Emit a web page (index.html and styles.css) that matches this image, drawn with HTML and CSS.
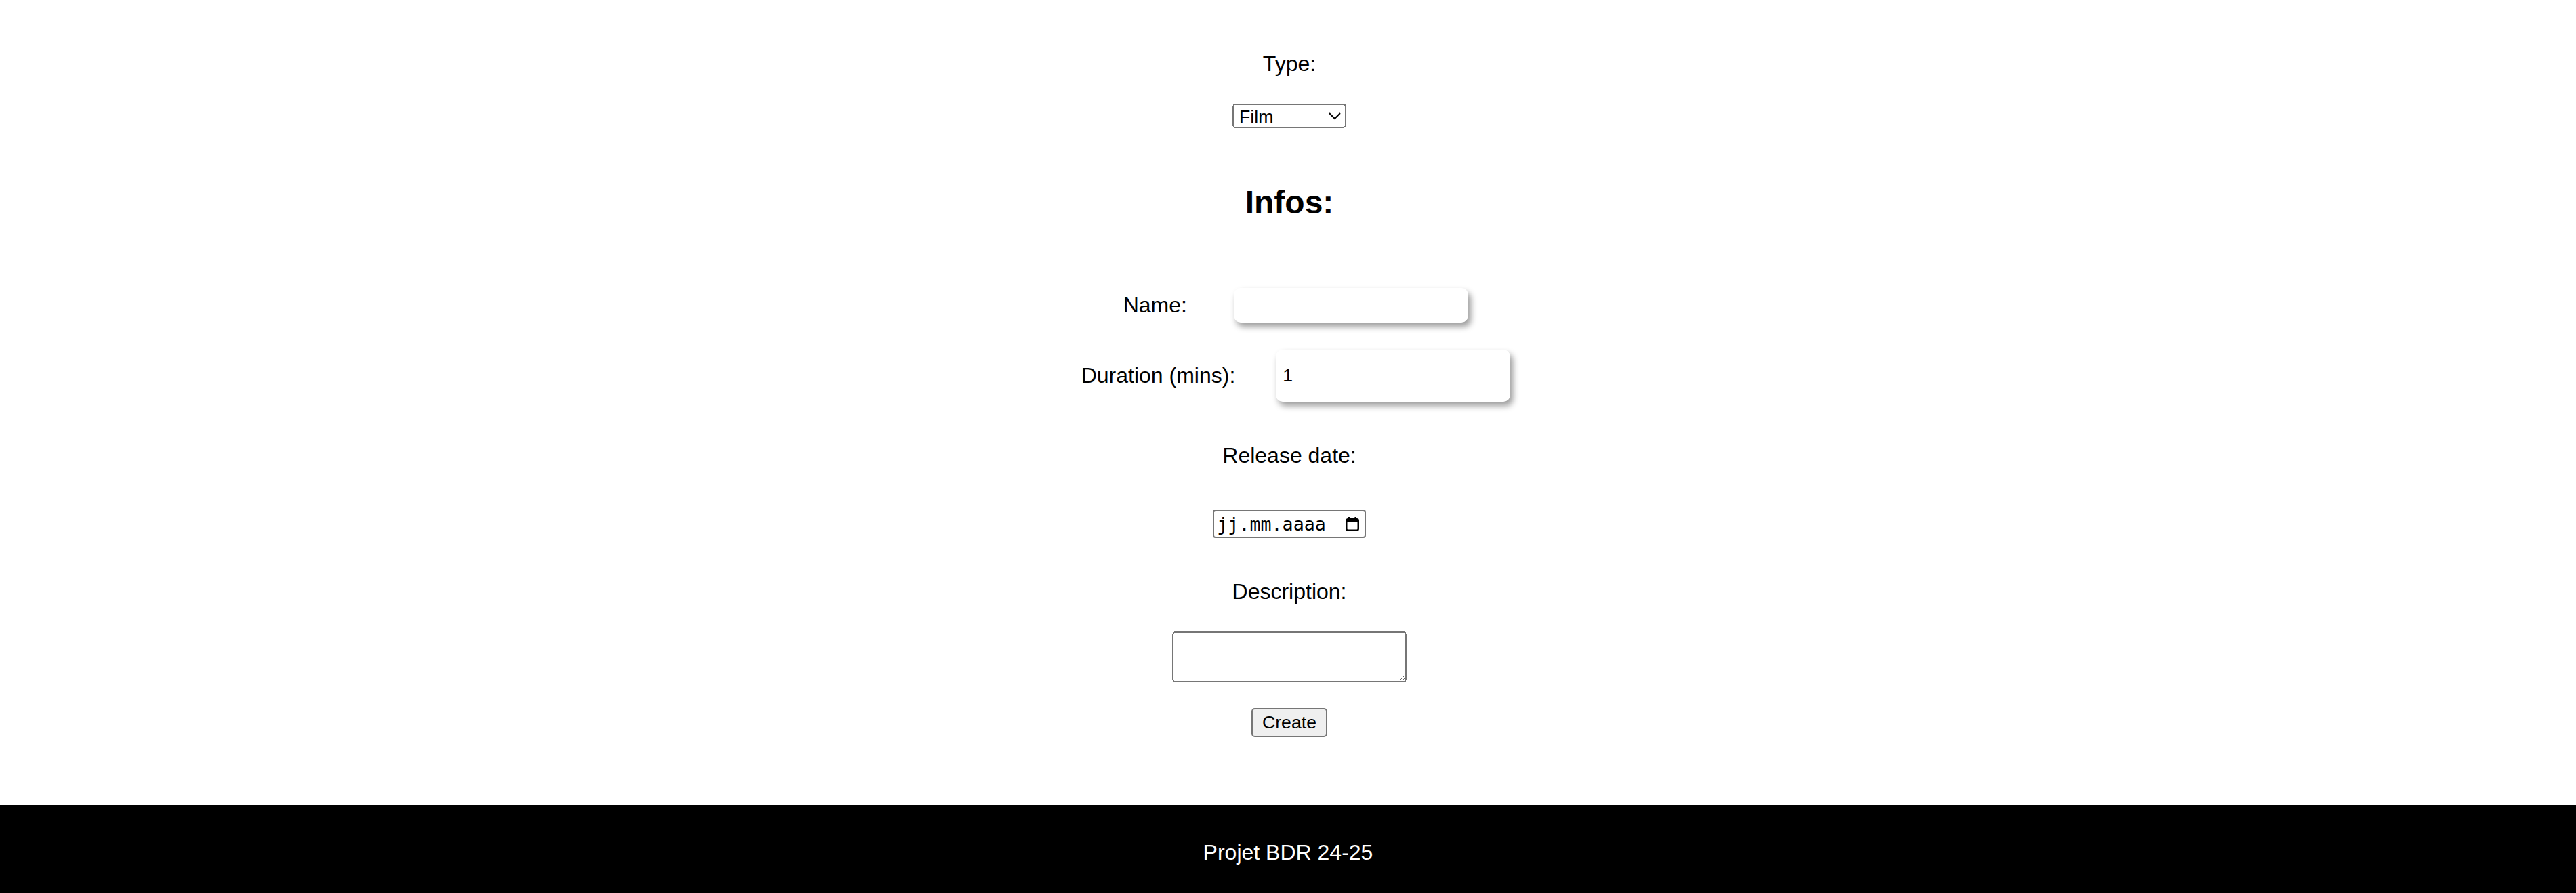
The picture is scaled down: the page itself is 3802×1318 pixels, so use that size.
FILE: index.html
```html
<!DOCTYPE html>
<html lang="fr">
<head>
<meta charset="utf-8">
<title>Create</title>
<link rel="stylesheet" href="styles.css">
</head>
<body>
<main class="page">
  <form class="form">
    <label class="label" for="type">Type:</label>
    <select id="type" class="select">
      <option>Film</option>
      <option>Série</option>
    </select>
    <h2 class="heading">Infos:</h2>
    <div class="row row--name">
      <label class="row-label row-label--name" for="name">Name:</label>
      <input id="name" class="field field--name" type="text">
    </div>
    <div class="row row--duration">
      <label class="row-label" for="duration">Duration (mins):</label>
      <input id="duration" class="field field--duration" type="number" value="1" min="1">
    </div>
    <label class="label label--date" for="release">Release date:</label>
    <div class="date-field">
      <input id="release" class="date-input" type="text" placeholder="jj.mm.aaaa">
      <svg class="date-icon" viewBox="0 0 20 21" aria-hidden="true">
        <rect x="1.25" y="3.25" width="17.5" height="16.5" rx="2.2" fill="none" stroke="#000" stroke-width="2.5"/>
        <rect x="1" y="3" width="18" height="5" fill="#000"/>
        <rect x="4" y="0" width="2.6" height="4" fill="#000"/>
        <rect x="13.4" y="0" width="2.6" height="4" fill="#000"/>
      </svg>
    </div>
    <label class="label label--desc" for="desc">Description:</label>
    <textarea id="desc" class="textarea"></textarea>
    <button class="button" type="submit">Create</button>
  </form>
</main>
<footer class="footer">
  <p class="footer-text">Projet BDR 24-25</p>
</footer>
</body>
</html>
```

FILE: styles.css
```css
html {
  zoom: 2;
}

body {
  margin: 0;
  font-family: "Liberation Sans", Arial, sans-serif;
  font-size: 16px;
  color: #000;
  background: #fff;
}

.page {
  padding: 38px 0 0 2px;
}

.form {
  display: flex;
  flex-direction: column;
  align-items: center;
  margin: 0;
}

.label {
  display: block;
  line-height: normal;
}

.select {
  margin: 20px 0 0;
  width: 84px;
  height: 18px;
  font: 13.333px "Liberation Sans", Arial, sans-serif;
  color: #000;
}

.heading {
  margin: 41px 0 0;
  font-size: 24px;
  font-weight: bold;
  line-height: normal;
}

.row {
  display: flex;
  align-items: center;
  gap: 30px;
  padding-left: 9.5px;
}

.row--name {
  margin-top: 49.6px;
}

.row--duration {
  margin-top: 20px;
}

.row-label {
  line-height: normal;
}

.row-label--name {
  margin-right: 4.7px;
}

.field {
  width: 173px;
  margin: 0;
  padding: 0 5px;
  box-sizing: border-box;
  border: none;
  border-radius: 5px;
  background: #fff;
  color: #000;
  font: 13.333px "Liberation Sans", Arial, sans-serif;
  box-shadow: 2px 3px 5px rgba(0, 0, 0, 0.4);
}

.field--name {
  height: 25.5px;
}

.field--duration {
  height: 38.5px;
  appearance: textfield;
}

.field--duration::-webkit-inner-spin-button,
.field--duration::-webkit-outer-spin-button {
  -webkit-appearance: none;
  margin: 0;
}

.label--date {
  margin-top: 30.5px;
}

.date-field {
  margin-top: 30.6px;
  width: 112.7px;
  height: 21px;
  box-sizing: border-box;
  border: 1px solid #767676;
  border-radius: 2px;
  display: flex;
  align-items: center;
  padding: 0 4px 0 2px;
  background: #fff;
}

.date-input {
  flex: 1;
  min-width: 0;
  margin: 0;
  padding: 0;
  border: none;
  outline: none;
  background: transparent;
  color: #000;
  font: 13.333px "DejaVu Sans Mono", "Liberation Mono", monospace;
}

.date-input::placeholder {
  color: #000;
  opacity: 1;
}

.date-icon {
  width: 10px;
  height: 10.5px;
  flex: none;
}

.label--desc {
  margin-top: 30.5px;
}

.textarea {
  margin: 20px 0 0;
  width: 173px;
  height: 37.5px;
  box-sizing: border-box;
}

.button {
  margin: 19px 0 0;
  font: 13.333px "Liberation Sans", Arial, sans-serif;
  color: #000;
}

.footer {
  margin-top: 50px;
  padding: 26px 0 20.6px;
  background: #000;
  color: #fff;
  text-align: center;
}

.footer-text {
  margin: 0;
  line-height: normal;
}
```
